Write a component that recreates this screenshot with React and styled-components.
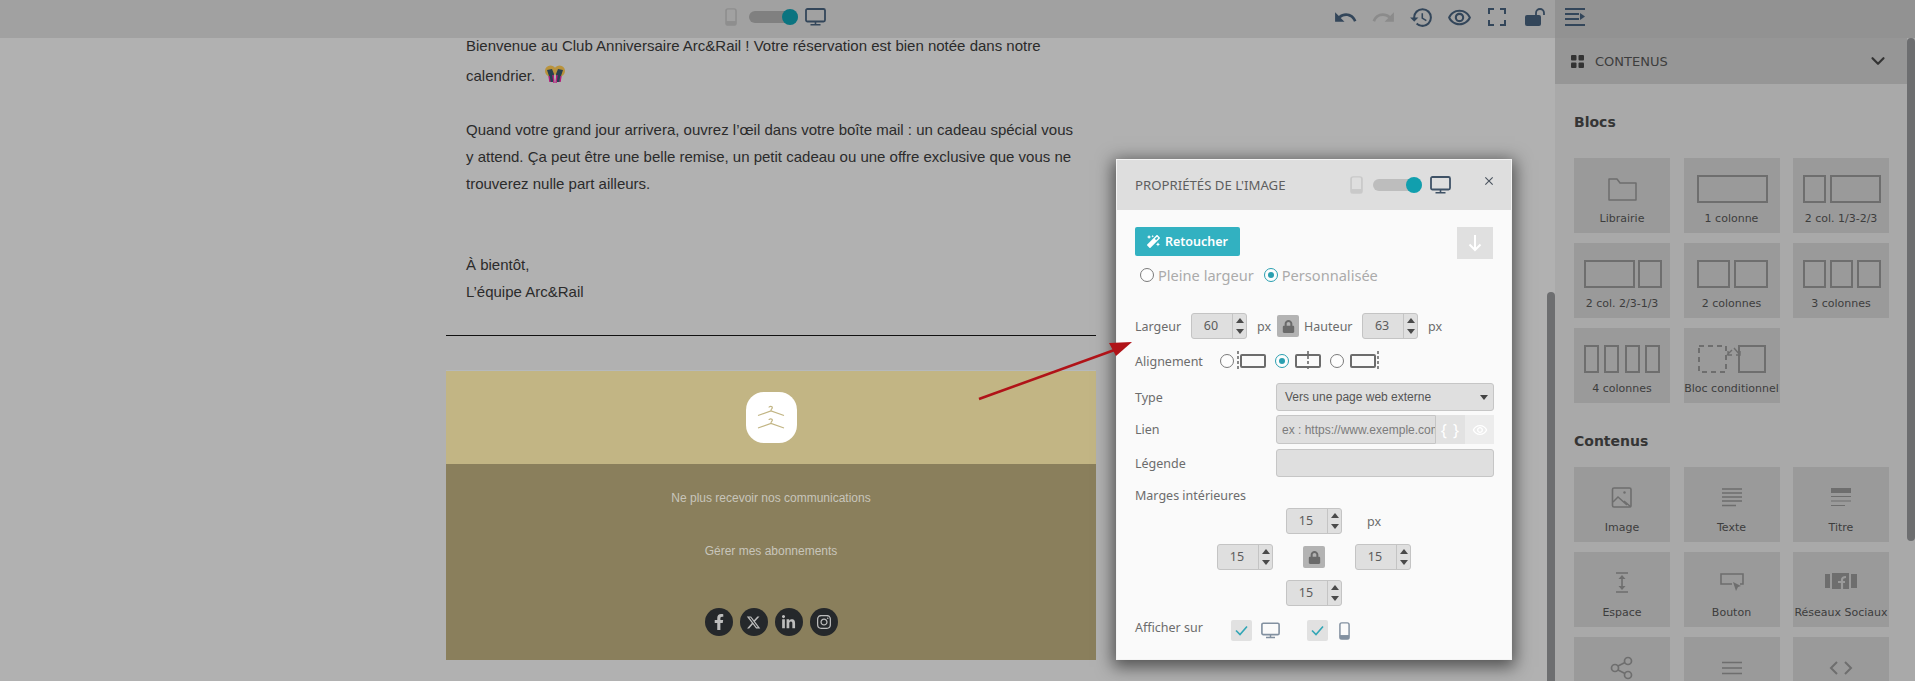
import React from 'react';
import styled, { createGlobalStyle } from 'styled-components';
import {
  MdUndo, MdRedo, MdHistory, MdOutlineRemoveRedEye, MdOutlineClose,
} from 'react-icons/md';
import { FaLock, FaMagic, FaFacebookF, FaLinkedinIn, FaInstagram } from 'react-icons/fa';
import { FaXTwitter } from 'react-icons/fa6';
import { FiChevronDown } from 'react-icons/fi';

const GlobalStyle = createGlobalStyle`
  html, body { margin: 0; padding: 0; background: #b1b1b1; }
  * { box-sizing: border-box; }
`;

const Page = styled.div`
  position: relative;
  width: 1915px;
  height: 681px;
  overflow: hidden;
  display: flex;
  flex-direction: column;
  background: #b1b1b1;
  font-family: "Liberation Sans", sans-serif;
`;

/* top bar */
const TopBar = styled.header`
  height: 38px;
  flex: none;
  display: flex;
  background: #a1a1a1;
`;
const BarMain = styled.div`
  width: 1555px;
  display: flex;
  align-items: center;
  padding-bottom: 4px;
  color: #33465a;
`;
const BarRight = styled.div`
  flex: 1;
  display: flex;
  align-items: center;
  padding: 0 0 4px 10px;
  background: #929292;
  color: #33465a;
`;
const ViewGroup = styled.div`
  display: flex;
  align-items: center;
  margin-left: ${p => p.$left}px;
`;
const Track = styled.span`
  position: relative;
  display: block;
  width: 49px;
  height: 12px;
  margin: ${p => p.$margin};
  border-radius: 6px;
  background: ${p => p.$bg};
`;
const Knob = styled.span`
  position: absolute;
  right: 0;
  top: -2px;
  width: 16px;
  height: 16px;
  border-radius: 50%;
  background: ${p => p.$bg};
`;
const ActionIcons = styled.div`
  display: flex;
  align-items: center;
  margin-left: ${p => p.$left}px;
`;
const ActionSlot = styled.span`
  width: 38px;
  height: 34px;
  display: flex;
  align-items: center;
  justify-content: center;
  color: ${p => p.$dim ? '#8b8b8b' : '#33465a'};
`;

/* main area */
const Main = styled.div`
  flex: 1;
  min-height: 0;
  display: flex;
`;
const Canvas = styled.main`
  position: relative;
  width: 1555px;
  flex: none;
  padding-left: 446px;
`;
const Thumb = styled.span`
  position: absolute;
  right: 0;
  top: ${p => p.$top}px;
  bottom: ${p => p.$bottom}px;
  width: 8px;
  border-radius: 4px;
  background: #6d6e70;
`;
const Mail = styled.article`
  width: 650px;
`;
const MailText = styled.div`
  display: flow-root;
  padding: 0 20px;
  height: 297px;
  color: #2b2b2b;
  font-size: 15px;
  line-height: 27px;
`;
const Line = styled.div`
  margin-top: ${p => p.$top || 0}px;
  height: ${p => p.$h || 27}px;
  white-space: nowrap;
`;
const Rule = styled.hr`
  margin: 0;
  border: 0;
  border-top: 1px solid #111;
`;
const GoldBand = styled.div`
  margin-top: 34px;
  height: 94px;
  display: flex;
  align-items: center;
  justify-content: center;
  background: #c2b584;
  border-top: 1px solid #b5b9bd;
`;
const Logo = styled.div`
  width: 51px;
  height: 51px;
  border-radius: 18px;
  background: #fff;
  display: flex;
  align-items: center;
  justify-content: center;
`;
const DarkBand = styled.div`
  height: 196px;
  display: flex;
  flex-direction: column;
  align-items: center;
  background: #8a7f5c;
  color: #c8c5bb;
  font-size: 12px;
`;
const FooterLink = styled.div`
  margin-top: ${p => p.$top}px;
  line-height: 14px;
`;
const Socials = styled.div`
  margin-top: 50px;
  display: flex;
  gap: 7px;
`;
const SocialDot = styled.span`
  width: 28px;
  height: 28px;
  border-radius: 50%;
  background: #25282b;
  color: #bdbdbd;
  display: flex;
  align-items: center;
  justify-content: center;
`;

/* sidebar */
const Sidebar = styled.aside`
  position: relative;
  flex: 1;
  background: #a9a9a9;
  color: #3d3d3d;
  font-family: "DejaVu Sans", sans-serif;
`;
const SideHead = styled.div`
  height: 46px;
  display: flex;
  align-items: center;
  padding: 0 18px 0 16px;
  margin-right: 8px;
  background: #969696;
  font-size: 13px;
  gap: 11px;
`;
const SideTitle = styled.span`
  flex: 1;
`;
const SideBody = styled.div`
  padding: 0 0 0 19px;
`;
const SectionTitle = styled.h3`
  margin: ${p => p.$top}px 0 ${p => p.$bottom}px;
  font-size: 14px;
  line-height: 16px;
  font-weight: 700;
  color: #353535;
`;
const Tiles = styled.div`
  display: grid;
  grid-template-columns: repeat(3, 96px);
  grid-auto-rows: 75px;
  gap: 10px 13.5px;
`;
const Tile = styled.div`
  display: flex;
  flex-direction: column;
  align-items: center;
  padding-top: 16px;
  background: #9a9a9a;
`;
const TileLabel = styled.span`
  margin-top: 8px;
  font-size: 11px;
  line-height: 14px;
  white-space: nowrap;
  color: #3d3d3d;
`;

/* modal */
const Modal = styled.section`
  position: absolute;
  left: 1116px;
  top: 159px;
  width: 396px;
  height: 501px;
  background: #fafafa;
  border: 1px solid #f4f4f4;
  box-shadow: 0 4px 16px 3px rgba(0, 0, 0, 0.55);
  color: #6c6c6c;
  font-family: "Noto Sans", sans-serif;
  font-size: 12.5px;
`;
const ModalHead = styled.div`
  height: 50px;
  display: flex;
  align-items: center;
  padding-left: 18px;
  background: #dedede;
  color: #5f5f5f;
`;
const ModalTitle = styled.h2`
  margin: 0;
  flex: none;
  width: 215px;
  font-size: 13.2px;
  font-weight: 400;
  white-space: nowrap;
`;
const CloseBtn = styled.span`
  margin: -8px 0 0 31px;
  display: flex;
  color: #4c5560;
`;
const ModalBody = styled.div`
  padding: 17px 17px 0 18px;
`;
const ActionsRow = styled.div`
  display: flex;
  justify-content: space-between;
  align-items: flex-start;
`;
const Retouch = styled.button`
  width: 105px;
  height: 29px;
  border: 0;
  border-radius: 2px;
  background: #32b1c1;
  color: #fff;
  font: 600 12.5px "Noto Sans", sans-serif;
  display: flex;
  align-items: center;
  justify-content: center;
  gap: 5px;
  padding: 0;
`;
const DownBtn = styled.span`
  width: 36px;
  height: 32px;
  margin-right: 1px;
  background: #e0e0e0;
  display: flex;
  align-items: center;
  justify-content: center;
`;
const RadioLine = styled.div`
  display: flex;
  align-items: center;
  height: 20px;
  margin: 6px 0 0 5px;
  color: #ababab;
  font-size: 14.6px;
`;
const RadioDot = styled.span`
  flex: none;
  width: 14px;
  height: 14px;
  border-radius: 50%;
  border: 1px solid ${p => p.$on ? '#2a9fb0' : '#7a7a7a'};
  background: #fdfdfd;
  display: flex;
  align-items: center;
  justify-content: center;
  margin-left: ${p => p.$before || 0}px;
  margin-right: ${p => p.$after || 0}px;
  &::after {
    content: "";
    width: 6px;
    height: 6px;
    border-radius: 50%;
    background: ${p => p.$on ? '#2a9fb0' : 'transparent'};
  }
`;
const Row = styled.div`
  display: flex;
  align-items: center;
  height: ${p => p.$h}px;
  margin-top: ${p => p.$top}px;
`;
const Label = styled.span`
  flex: none;
  width: ${p => p.$w ? `${p.$w}px` : 'auto'};
  margin-left: ${p => p.$left || 0}px;
  margin-bottom: ${p => p.$raise || 0}px;
  white-space: nowrap;
`;
const Unit = styled.span`
  margin-left: ${p => p.$left}px;
`;
const StepperBox = styled.span`
  flex: none;
  display: flex;
  width: 56px;
  height: 26px;
  border: 1px solid #c4c4c4;
  border-radius: 3px;
  background: #dfdfdf;
  color: #5c5c5c;
`;
const StepValue = styled.span`
  flex: 1;
  text-align: center;
  line-height: 23px;
  padding-right: 2px;
`;
const StepArrows = styled.span`
  width: 14px;
  border-left: 1px solid #c4c4c4;
  display: flex;
  flex-direction: column;
  align-items: center;
  justify-content: space-between;
  padding: 4px 0;
`;
const Tri = styled.span`
  width: 0;
  height: 0;
  border-left: 4px solid transparent;
  border-right: 4px solid transparent;
  ${p => p.$down ? 'border-top: 5px solid #4a4a4a;' : 'border-bottom: 5px solid #4a4a4a;'}
`;
const LockBox = styled.span`
  flex: none;
  width: 22px;
  height: 22px;
  border-radius: 2px;
  background: #b3b3b3;
  color: #6a6a6a;
  display: flex;
  align-items: center;
  justify-content: center;
  margin-left: ${p => p.$left || 0}px;
`;
const AlignOption = styled.span`
  display: flex;
  align-items: center;
  margin-right: 1px;
`;
const Field = styled.span`
  flex: 1;
  height: 28px;
  border: 1px solid #c6c6c6;
  border-radius: 3px;
  background: #dfdfdf;
  display: flex;
  align-items: center;
  justify-content: space-between;
  padding: 0 5px 0 8px;
  color: #555;
  font-family: "Liberation Sans", sans-serif;
  font-size: 12px;
`;
const Caret = styled.span`
  width: 0;
  height: 0;
  border-left: 4px solid transparent;
  border-right: 4px solid transparent;
  border-top: 5px solid #444;
`;
const LinkGroup = styled.span`
  flex: 1;
  height: 29px;
  display: flex;
`;
const LinkInput = styled.input`
  width: 160px;
  min-width: 0;
  height: 29px;
  border: 1px solid #c6c6c6;
  border-radius: 3px 0 0 3px;
  background: #dfdfdf;
  padding: 0 0 0 5px;
  outline: 0;
  font: 12px "Liberation Sans", sans-serif;
  &::placeholder { color: #7c7c7c; opacity: 1; }
`;
const LinkBtn = styled.span`
  width: 29px;
  display: flex;
  align-items: center;
  justify-content: center;
  background: ${p => p.$bg};
  color: #fff;
  font-size: 16px;
  letter-spacing: 1px;
`;
const Cross = styled.div`
  margin: 4px 0 0 82px;
  display: grid;
  grid-template-columns: repeat(3, 56px);
  grid-auto-rows: 26px;
  gap: 10px 13px;
  align-items: center;
`;
const CrossCell = styled.span`
  display: flex;
  align-items: center;
  justify-content: ${p => p.$center ? 'center' : 'flex-start'};
  padding-left: ${p => p.$pad || 0}px;
`;
const Check = styled.span`
  flex: none;
  width: 21px;
  height: 21px;
  border-radius: 2px;
  background: #e1e1e1;
  display: flex;
  align-items: center;
  justify-content: center;
  margin-left: ${p => p.$left}px;
`;
const DeviceIcon = styled.span`
  display: flex;
  margin-left: ${p => p.$left}px;
`;
const Pointer = styled.svg`
  position: absolute;
  left: 970px;
  top: 335px;
  pointer-events: none;
`;
const PartySvg = styled.svg`
  vertical-align: -4px;
`;

/* drawings */
const Phone = ({ color, w = 12, h = 18 }) => (
  <svg width={w} height={h} viewBox="0 0 12 20" preserveAspectRatio="none" fill="none">
    <rect x="1" y="1" width="10" height="18" rx="2" stroke={color} strokeWidth="1.6" />
    <rect x="1" y="14.5" width="10" height="4.5" fill={color} />
  </svg>
);
const Monitor = ({ color, w = 21, h = 18 }) => (
  <svg width={w} height={h} viewBox="0 0 21 18" fill="none">
    <rect x="1" y="1" width="19" height="12.5" rx="1.5" stroke={color} strokeWidth="1.8" />
    <path d="M10.5 14v2.5M5.5 16.8h10" stroke={color} strokeWidth="1.6" />
  </svg>
);
const Fullscreen = () => (
  <svg width="18" height="18" viewBox="0 0 18 18" fill="none" stroke="#33465a" strokeWidth="2">
    <path d="M1 6V1h5M12 1h5v5M17 12v5h-5M6 17H1v-5" />
  </svg>
);
const OpenLock = () => (
  <svg width="21" height="18" viewBox="0 0 21 18" fill="none">
    <rect x="0" y="7" width="16" height="11" rx="2" fill="#33465a" />
    <path d="M11 8V5a4 4 0 0 1 8 0v2" stroke="#33465a" strokeWidth="1.8" />
  </svg>
);
const Collapse = () => (
  <svg width="20" height="18" viewBox="0 0 20 18" fill="#33465a">
    <rect x="0" y="0" width="20" height="2" />
    <rect x="0" y="5" width="14" height="2" />
    <rect x="0" y="10" width="14" height="2" />
    <rect x="0" y="16" width="20" height="2" />
    <path d="M15 5l5 3.5-5 3.5z" />
  </svg>
);
const Squares = () => (
  <svg width="13" height="13" viewBox="0 0 13 13" fill="#333">
    <rect x="0" y="0" width="5.5" height="5.5" rx="1" />
    <rect x="7.5" y="0" width="5.5" height="5.5" rx="1" />
    <rect x="0" y="7.5" width="5.5" height="5.5" rx="1" />
    <rect x="7.5" y="7.5" width="5.5" height="5.5" rx="1" />
  </svg>
);
const Hangers = () => (
  <svg width="30" height="30" viewBox="0 0 30 30" fill="none" stroke="#c2b584" strokeWidth="1.2">
    <path d="M13 4.500c0-1.500 3.500-1.500 3.300.3 0 1-1.300 1.300-1.300 2.600M2 12.500L15 8l13 4.500" />
    <path d="M13 17c0-1.500 3.500-1.500 3.300.3 0 1-1.300 1.300-1.300 2.600M2 25l13-4.500L28 25" />
  </svg>
);
const Party = () => (
  <PartySvg width="22" height="20" viewBox="0 0 22 20">
    <circle cx="6.5" cy="6" r="5.5" fill="#b9933c" />
    <circle cx="15.5" cy="6" r="5.5" fill="#b9933c" />
    <path d="M3 5l5-1 2 5-1 8H6l-1-6z" fill="#27404f" />
    <path d="M19 5l-5-1-2 5 1 8h3l1-6z" fill="#27404f" />
    <path d="M5 11l1 6M9 10l1 8M13 10l-1 8M17 11l-1 6" stroke="#b51d7c" strokeWidth="1.4" />
  </PartySvg>
);

const Art = ({ children }) => (
  <svg width="96" height="30" viewBox="0 0 96 30" fill="none" stroke="#6e6e6e" strokeWidth="2">
    {children}
  </svg>
);
const Cols = ({ spans }) => (
  <Art>
    {spans.map(([a, b]) => <rect key={a} x={a} y="2" width={b - a} height="26" />)}
  </Art>
);

const blocs = [
  { label: 'Librairie', art: <Art><path d="M35 5h8l3 4h16v17H35z" strokeWidth="1.5" strokeLinejoin="round" /></Art> },
  { label: '1 colonne', art: <Cols spans={[[14, 83]]} /> },
  { label: '2 col. 1/3-2/3', art: <Cols spans={[[11, 32], [38, 87]]} /> },
  { label: '2 col. 2/3-1/3', art: <Cols spans={[[11, 60], [65, 87]]} /> },
  { label: '2 colonnes', art: <Cols spans={[[14, 45], [51, 83]]} /> },
  { label: '3 colonnes', art: <Cols spans={[[11, 32], [38, 59], [65, 87]]} /> },
  { label: '4 colonnes', art: <Cols spans={[[11, 24], [31, 44], [52, 65], [72, 85]]} /> },
  {
    label: 'Bloc conditionnel',
    art: (
      <Art>
        <rect x="15" y="2" width="27" height="26" strokeDasharray="5 4" />
        <path d="M55 28V2h26v26z" />
        <path d="M43 11l5-5M44 7v4h4M50 4l6 7M56 7v4h-4" fill="none" strokeWidth="1.4" stroke="#6e6e6e" />
      </Art>
    ),
  },
];

const contents = [
  {
    label: 'Image',
    art: (
      <Art>
        <rect x="38.5" y="5" width="18.5" height="19" rx="1.5" strokeWidth="1.6" />
        <circle cx="50.5" cy="9.5" r="1.2" fill="#6e6e6e" stroke="none" />
        <path d="M39 19l5-5 9 8M50 18l7 6" strokeWidth="1.5" />
      </Art>
    ),
  },
  {
    label: 'Texte',
    art: <Art><path d="M38 6h20M38 10h20M38 14h20M38 18h20M38 22.500h14" strokeWidth="1.6" /></Art>,
  },
  {
    label: 'Titre',
    art: (
      <Art>
        <rect x="38" y="5" width="20" height="5" fill="#6e6e6e" stroke="none" />
        <path d="M38 13.500h20M38 18h20M38 22.500h14" strokeWidth="1.2" />
      </Art>
    ),
  },
  {
    label: 'Espace',
    art: (
      <Art>
        <path d="M42 5h12M42 24h12" strokeWidth="1.6" />
        <path d="M48 8v13" strokeWidth="1.6" />
        <path d="M44.500 11l3.500-4 3.500 4zM44.500 18l3.500 4 3.500-4z" fill="#6e6e6e" stroke="none" />
      </Art>
    ),
  },
  {
    label: 'Bouton',
    art: (
      <Art>
        <path d="M48 16H37V6h22v10h-3" strokeWidth="1.6" />
        <path d="M49 14l8 4-3 1-2 4z" fill="#6e6e6e" stroke="none" />
      </Art>
    ),
  },
  {
    label: 'Réseaux Sociaux',
    art: (
      <Art>
        <rect x="32" y="6" width="5" height="14" fill="#6e6e6e" stroke="none" />
        <rect x="39" y="5" width="17" height="16" fill="#6e6e6e" stroke="none" />
        <rect x="58" y="6" width="6" height="14" fill="#6e6e6e" stroke="none" />
        <path d="M49 21v-9c0-2 1-3 4-3M45 14h7" stroke="#9a9a9a" strokeWidth="2.2" />
      </Art>
    ),
  },
  {
    key: 'share',
    art: (
      <Art>
        <circle cx="41" cy="15" r="3.5" strokeWidth="1.7" />
        <circle cx="54" cy="8" r="3.5" strokeWidth="1.7" />
        <circle cx="54" cy="22" r="3.5" strokeWidth="1.7" />
        <path d="M44 13l7-3.500M44 17l7 3.500" strokeWidth="1.7" />
      </Art>
    ),
  },
  { key: 'divider', art: <Art><path d="M38 9.500h20M38 15h20M38 20.500h20" strokeWidth="1.6" /></Art> },
  { key: 'code', art: <Art><path d="M44 9l-6 6 6 6M52 9l6 6-6 6" strokeWidth="2" /></Art> },
];

const Stepper = ({ value }) => (
  <StepperBox>
    <StepValue>{value}</StepValue>
    <StepArrows><Tri /><Tri $down /></StepArrows>
  </StepperBox>
);

const AlignArt = ({ guide }) => (
  <svg width="40" height="20" viewBox="0 0 40 20" fill="none" stroke="#6c6c6c">
    <rect x="7" y="4" width="24" height="12" rx="1" strokeWidth="2" />
    <path d={`M${guide} 0v20`} strokeWidth="1.6" strokeDasharray="3 2" />
  </svg>
);

const Tick = () => (
  <svg width="13" height="11" viewBox="0 0 13 11" fill="none" stroke="#32a6b6" strokeWidth="1.6">
    <path d="M1 5.500l4 4 7-8" />
  </svg>
);

export default function App() {
  return (
    <Page>
      <GlobalStyle />
      <TopBar>
        <BarMain>
          <ViewGroup $left={725}>
            <Phone color="#8e8e8e" />
            <Track $bg="#808080" $margin="0 7px 0 12px"><Knob $bg="#0b7480" /></Track>
            <Monitor color="#33465a" />
          </ViewGroup>
          <ActionIcons $left={500}>
            <ActionSlot><MdUndo size={25} /></ActionSlot>
            <ActionSlot $dim><MdRedo size={25} /></ActionSlot>
            <ActionSlot><MdHistory size={25} /></ActionSlot>
            <ActionSlot><MdOutlineRemoveRedEye size={25} /></ActionSlot>
            <ActionSlot><Fullscreen /></ActionSlot>
            <ActionSlot><OpenLock /></ActionSlot>
          </ActionIcons>
        </BarMain>
        <BarRight><Collapse /></BarRight>
      </TopBar>

      <Main>
        <Canvas>
          <Thumb $top={254} $bottom={-4} />
          <Mail>
            <MailText>
              <Line $h={30} $top={-6}>Bienvenue au Club Anniversaire Arc&amp;Rail ! Votre réservation est bien notée dans notre</Line>
              <Line $h={30}>calendrier.&nbsp; <Party /></Line>
              <Line $top={24}>Quand votre grand jour arrivera, ouvrez l’œil dans votre boîte mail : un cadeau spécial vous</Line>
              <Line>y attend. Ça peut être une belle remise, un petit cadeau ou une offre exclusive que vous ne</Line>
              <Line>trouverez nulle part ailleurs.</Line>
              <Line $top={54}>À bientôt,</Line>
              <Line>L’équipe Arc&amp;Rail</Line>
            </MailText>
            <Rule />
            <GoldBand><Logo><Hangers /></Logo></GoldBand>
            <DarkBand>
              <FooterLink $top={27}>Ne plus recevoir nos communications</FooterLink>
              <FooterLink $top={39}>Gérer mes abonnements</FooterLink>
              <Socials>
                <SocialDot><FaFacebookF size={16} /></SocialDot>
                <SocialDot><FaXTwitter size={15} /></SocialDot>
                <SocialDot><FaLinkedinIn size={15} /></SocialDot>
                <SocialDot><FaInstagram size={16} /></SocialDot>
              </Socials>
            </DarkBand>
          </Mail>
        </Canvas>

        <Sidebar>
          <Thumb $top={0} $bottom={140} />
          <SideHead>
            <Squares />
            <SideTitle>CONTENUS</SideTitle>
            <FiChevronDown size={22} strokeWidth={2.4} color="#333" />
          </SideHead>
          <SideBody>
            <SectionTitle $top={30} $bottom={28}>Blocs</SectionTitle>
            <Tiles>
              {blocs.map(t => <Tile key={t.label}>{t.art}<TileLabel>{t.label}</TileLabel></Tile>)}
            </Tiles>
            <SectionTitle $top={30} $bottom={18}>Contenus</SectionTitle>
            <Tiles>
              {contents.map(t => (
                <Tile key={t.label || t.key}>
                  {t.art}
                  {t.label && <TileLabel>{t.label}</TileLabel>}
                </Tile>
              ))}
            </Tiles>
          </SideBody>
        </Sidebar>
      </Main>

      <Modal>
        <ModalHead>
          <ModalTitle>PROPRIÉTÉS DE L'IMAGE</ModalTitle>
          <Phone color="#c9c9c9" w={13} />
          <Track $bg="#bdbdbd" $margin="0 8px 0 10px"><Knob $bg="#119fae" /></Track>
          <Monitor color="#3f5266" />
          <CloseBtn><MdOutlineClose size={14} /></CloseBtn>
        </ModalHead>
        <ModalBody>
          <ActionsRow>
            <Retouch><FaMagic size={13} />Retoucher</Retouch>
            <DownBtn>
              <svg width="14" height="18" viewBox="0 0 14 18" fill="none" stroke="#fff" strokeWidth="2"><path d="M7 1v15M1.500 10.500L7 16l5.500-5.500" /></svg>
            </DownBtn>
          </ActionsRow>
          <RadioLine>
            <RadioDot $after={4} />Pleine largeur
            <RadioDot $on $before={10} $after={4} />Personnalisée
          </RadioLine>
          <Row $h={26} $top={28}>
            <Label $w={56}>Largeur</Label>
            <Stepper value="60" />
            <Unit $left={10}>px</Unit>
            <LockBox $left={6}><FaLock size={13} /></LockBox>
            <Label $left={5} $w={58}>Hauteur</Label>
            <Stepper value="63" />
            <Unit $left={10}>px</Unit>
          </Row>
          <Row $h={20} $top={12}>
            <Label $w={85}>Alignement</Label>
            <AlignOption><RadioDot /><AlignArt guide={4} /></AlignOption>
            <AlignOption><RadioDot $on /><AlignArt guide={19} /></AlignOption>
            <AlignOption><RadioDot /><AlignArt guide={34} /></AlignOption>
          </Row>
          <Row $h={28} $top={12}>
            <Label $w={141}>Type</Label>
            <Field>Vers une page web externe<Caret /></Field>
          </Row>
          <Row $h={29} $top={4}>
            <Label $w={141}>Lien</Label>
            <LinkGroup>
              <LinkInput readOnly placeholder="ex : https://www.exemple.com" />
              <LinkBtn $bg="#e2e2e2">{'{ }'}</LinkBtn>
              <LinkBtn $bg="#ececec"><MdOutlineRemoveRedEye size={16} /></LinkBtn>
            </LinkGroup>
          </Row>
          <Row $h={28} $top={5}>
            <Label $w={141}>Légende</Label>
            <Field />
          </Row>
          <Row $h={18} $top={9}><Label>Marges intérieures</Label></Row>
          <Cross>
            <span />
            <Stepper value="15" />
            <CrossCell $pad={12}>px</CrossCell>
            <Stepper value="15" />
            <CrossCell $center><LockBox><FaLock size={13} /></LockBox></CrossCell>
            <Stepper value="15" />
            <span />
            <Stepper value="15" />
            <span />
          </Cross>
          <Row $h={21} $top={14}>
            <Label $w={96} $raise={6}>Afficher sur</Label>
            <Check $left={0}><Tick /></Check>
            <DeviceIcon $left={9}><Monitor color="#8290a0" w={19} h={17} /></DeviceIcon>
            <Check $left={27}><Tick /></Check>
            <DeviceIcon $left={11}><Phone color="#8290a0" w={11} h={18} /></DeviceIcon>
          </Row>
        </ModalBody>
      </Modal>

      <Pointer width="170" height="75" viewBox="0 0 170 75">
        <path d="M9 64L150 13" stroke="#b01318" strokeWidth="2.6" />
        <path d="M162 7l-23 1 7 13z" fill="#b01318" />
      </Pointer>
    </Page>
  );
}
